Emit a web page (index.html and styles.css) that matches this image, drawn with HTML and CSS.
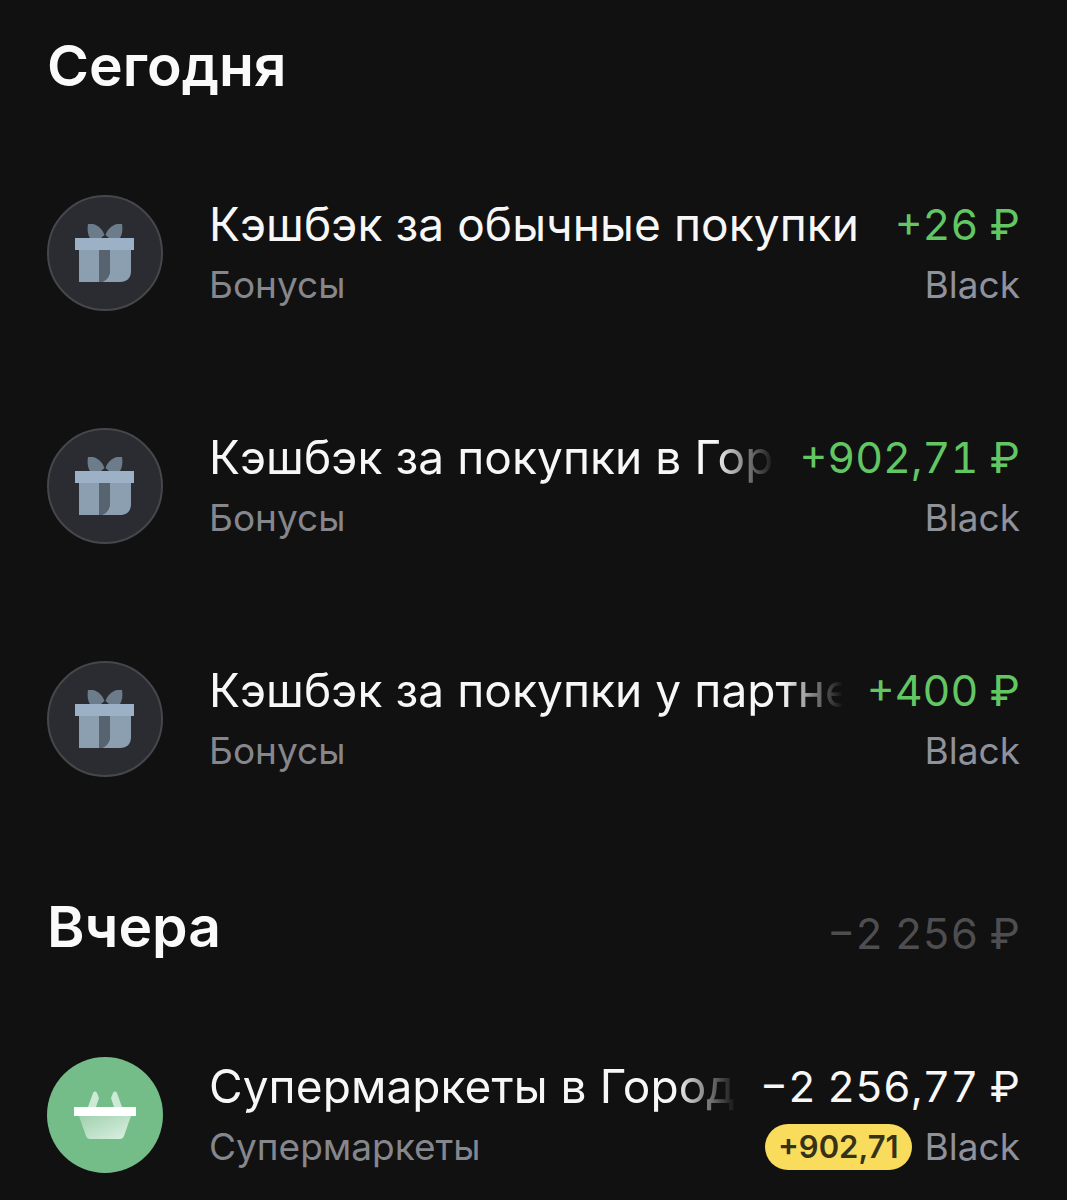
FILE: index.html
```html
<!DOCTYPE html>
<html lang="ru">
<head>
  <meta charset="UTF-8">
  <title>История</title>
  <link rel="stylesheet" href="styles.css">
</head>
<body>

  <svg class="defs" width="0" height="0">
    <defs>
      <symbol id="gift" viewBox="0 0 60 59">
        <path d="M13 0 H18 C23 1 28 6 29.500 11 L26 14 H15 C13 11 12 6 13 0 Z M47 0 H42 C37 1 32 6 30.500 11 L34 14 H45 C47 11 48 6 47 0 Z" fill="#6d7c8b"/>
        <path d="M4 26 H24 V58 H4 Z" fill="#8c9fb0"/>
        <path d="M24 26 H35 V46 C35 52 32 56 27 58 H24 Z" fill="#57636f"/>
        <path d="M35 26 H56 V47 C56 54 52 58 45 58 H27 C32 56 35 52 35 46 Z" fill="#8c9fb0"/>
        <rect x="0" y="14" width="59" height="12" fill="#9cb1c6"/>
      </symbol>
      <linearGradient id="basket-fill" x1="0" y1="0" x2="1" y2="1">
        <stop offset="0" stop-color="#a0d1ae"/>
        <stop offset="1" stop-color="#dcf0e3"/>
      </linearGradient>
      <symbol id="basket" viewBox="0 0 62 48">
        <path d="M19 2 C20 0 22 0 23 2 L25 7 L22 16 H14 Z M43 2 C42 0 40 0 39 2 L37 7 L40 16 H48 Z" fill="#cfe9d7"/>
        <rect x="0" y="16" width="62" height="9" fill="#fff"/>
        <path d="M5 25 H57 L50 45 C49 47 48 48 46 48 H16 C14 48 13 47 12 45 Z" fill="url(#basket-fill)"/>
      </symbol>
    </defs>
  </svg>

  <div class="feed">

    <div class="day-head day-head-first">
      <div class="day-title">Сегодня</div>
    </div>

    <div class="row">
      <div class="avatar avatar-gift"><svg class="icon-gift"><use href="#gift"></use></svg></div>
      <div class="row-body">
        <div class="line">
          <div class="name">Кэшбэк за обычные покупки</div>
          <div class="sum sum-plus">+26 ₽</div>
        </div>
        <div class="line line-sub">
          <div class="cat">Бонусы</div>
          <div class="card">Black</div>
        </div>
      </div>
    </div>

    <div class="row">
      <div class="avatar avatar-gift"><svg class="icon-gift"><use href="#gift"></use></svg></div>
      <div class="row-body">
        <div class="line">
          <div class="name name-cut">Кэшбэк за покупки в Городе</div>
          <div class="sum sum-plus">+902,71 ₽</div>
        </div>
        <div class="line line-sub">
          <div class="cat">Бонусы</div>
          <div class="card">Black</div>
        </div>
      </div>
    </div>

    <div class="row">
      <div class="avatar avatar-gift"><svg class="icon-gift"><use href="#gift"></use></svg></div>
      <div class="row-body">
        <div class="line">
          <div class="name name-cut">Кэшбэк за покупки у партнеров</div>
          <div class="sum sum-plus">+400 ₽</div>
        </div>
        <div class="line line-sub">
          <div class="cat">Бонусы</div>
          <div class="card">Black</div>
        </div>
      </div>
    </div>

    <div class="day-head">
      <div class="day-title">Вчера</div>
      <div class="day-sum">−2 256 ₽</div>
    </div>

    <div class="row">
      <div class="avatar avatar-shop"><svg class="icon-basket"><use href="#basket"></use></svg></div>
      <div class="row-body">
        <div class="line">
          <div class="name name-cut">Супермаркеты в Городе</div>
          <div class="sum">−2 256,77 ₽</div>
        </div>
        <div class="line line-sub">
          <div class="cat">Супермаркеты</div>
          <div class="card-wrap">
            <span class="bonus">+902,71</span>
            <div class="card">Black</div>
          </div>
        </div>
      </div>
    </div>

  </div>

</body>
</html>
```

FILE: styles.css
```css
html, body {
  height: 1200px;
  overflow: hidden;
}

body {
  font-family: Inter, Roboto, sans-serif;
  margin: 0;
  padding: 0;
  background: #111112;
  color: #f5f5f5;
}

.defs {
  display: block;
  height: 0;
}

.feed {
  padding: 0 47px;
}

.day-head {
  display: flex;
  justify-content: space-between;
  align-items: center;
  height: 70px;
  margin-top: 114px;
  margin-bottom: 96px;
}

.day-head-first {
  margin-top: 30px;
  margin-bottom: 95px;
}

.day-title {
  font-size: 57px;
  font-weight: 600;
  color: #fafafa;
}

.day-sum {
  font-size: 43px;
  color: #4e4e50;
  padding-top: 14px;
  font-variant-numeric: tabular-nums;
}

.row {
  display: flex;
  align-items: center;
  gap: 46px;
  height: 116px;
}

.row + .row {
  margin-top: 117px;
}

.avatar {
  flex: none;
  display: flex;
  align-items: center;
  justify-content: center;
  width: 116px;
  height: 116px;
  border-radius: 50%;
  box-sizing: border-box;
}

.avatar-gift {
  background: #2a2c31;
  border: 2px solid #46474b;
}

.avatar-shop {
  background: #74bd89;
}

.icon-gift {
  width: 60px;
  height: 59px;
}

.icon-basket {
  width: 62px;
  height: 48px;
}

.row-body {
  flex: 1;
  min-width: 0;
  margin-top: -2px;
}

.line {
  display: flex;
  justify-content: space-between;
  align-items: center;
  height: 52px;
}

.line-sub {
  height: 44px;
  margin-top: 13px;
}

.name {
  font-size: 46px;
  letter-spacing: 0.08px;
  white-space: nowrap;
  overflow: hidden;
  min-width: 0;
  flex: 1;
  color: #f7f7f7;
}

.name-cut {
  margin-right: 24px;
  -webkit-mask-image: linear-gradient(to right, #000 calc(100% - 60px), transparent);
  mask-image: linear-gradient(to right, #000 calc(100% - 60px), transparent);
}

.sum {
  flex: none;
  font-size: 43px;
  color: #f7f7f7;
  font-variant-numeric: tabular-nums;
}

.sum-plus {
  color: #62c763;
}

.cat {
  font-size: 37px;
  color: #85878c;
}

.card {
  font-size: 37px;
  color: #8f929a;
}

.card-wrap {
  display: flex;
  align-items: center;
  gap: 13px;
}

.bonus {
  display: block;
  height: 46px;
  line-height: 46px;
  padding: 0 13px;
  border-radius: 23px;
  background: #fadc5c;
  color: #353217;
  font-size: 31px;
  font-weight: 600;
}
```
